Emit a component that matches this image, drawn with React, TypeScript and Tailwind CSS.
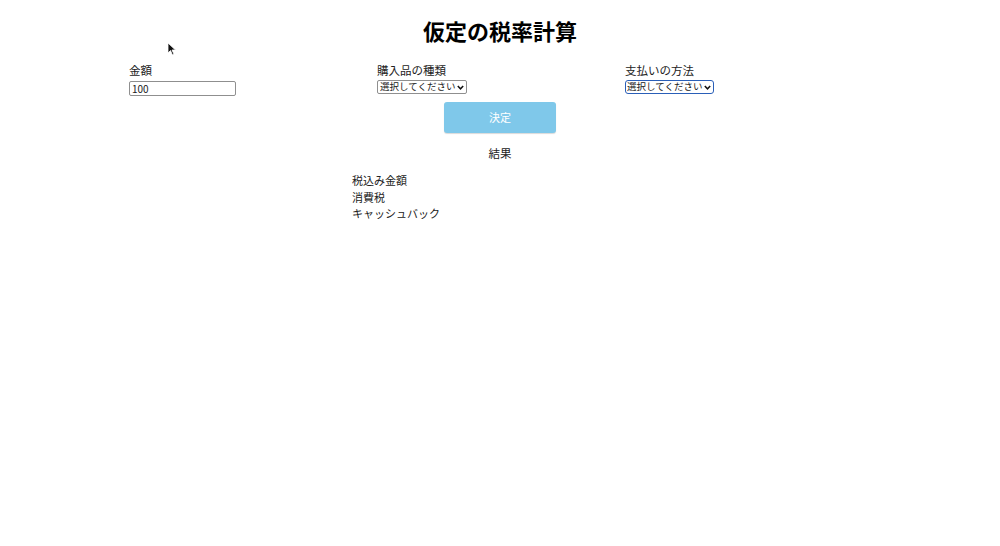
const FONT = "font-['Noto_Sans_CJK_JP',_'Noto_Sans',_sans-serif]"

function Cursor() {
  return (
    <svg className="absolute left-[167px] top-[42px]" width="10" height="14" viewBox="0 0 10 14">
      <path d="M1 1 L1 11 L3.5 8.5 L5.5 13 L7 12.3 L5 8 L8.5 8 Z" fill="#111" stroke="#fff" strokeWidth="0.8" />
    </svg>
  )
}

function Chevron() {
  return (
    <svg width="7" height="5" viewBox="0 0 7 5" className="shrink-0">
      <path d="M0.8 1 L3.5 3.8 L6.2 1" fill="none" stroke="#111" strokeWidth="1.5" />
    </svg>
  )
}

export default function App() {
  return (
    <div className={`relative w-[1000px] h-[546px] bg-white text-[#222] ${FONT}`}>
      <Cursor />
      <h1 className="pt-[14px] text-center text-[22px] font-bold leading-[32px] text-black">仮定の税率計算</h1>

      <div className="ml-[129px] mt-[16px] grid w-[744px] grid-cols-3">
        <div className="flex flex-col">
          <label className="text-[11.5px] leading-[16px]">金額</label>
          <input
            defaultValue="100"
            className="mt-[3px] h-[15px] w-[107px] rounded-[2px] border border-[#8f8f8f] px-[2px] text-[10px] leading-[13px] outline-none"
          />
        </div>
        <div className="flex flex-col">
          <label className="text-[11.5px] leading-[16px]">購入品の種類</label>
          <div className="mt-[2px] flex h-[14px] w-[90px] items-center justify-between gap-[1px] overflow-hidden whitespace-nowrap rounded-[2px] border border-[#8f8f8f] pl-[2px] pr-[2px] text-[9.5px] leading-none">
            <span>選択してください</span>
            <Chevron />
          </div>
        </div>
        <div className="flex flex-col">
          <label className="text-[11.5px] leading-[16px]">支払いの方法</label>
          <div className="mt-[2px] flex h-[14px] w-[89px] items-center justify-between gap-[1px] overflow-hidden whitespace-nowrap rounded-[3px] border-[1.5px] border-[#2a5fb8] pl-[1px] pr-[2px] text-[9.5px] leading-none">
            <span>選択してください</span>
            <Chevron />
          </div>
        </div>
      </div>

      <div className="mt-[6px] flex justify-center">
        <button className="h-[31px] w-[112px] rounded-[3px] bg-[#7fc8ea] text-[11px] text-white shadow-[0_1px_1px_rgba(0,0,0,0.15)]">
          決定
        </button>
      </div>

      <p className="mt-[12px] text-center text-[11.5px] leading-[16px]">結果</p>

      <ul className="ml-[352px] mt-[11px] flex flex-col text-[11px] leading-[16.5px]">
        <li>税込み金額</li>
        <li>消費税</li>
        <li>キャッシュバック</li>
      </ul>
    </div>
  )
}
